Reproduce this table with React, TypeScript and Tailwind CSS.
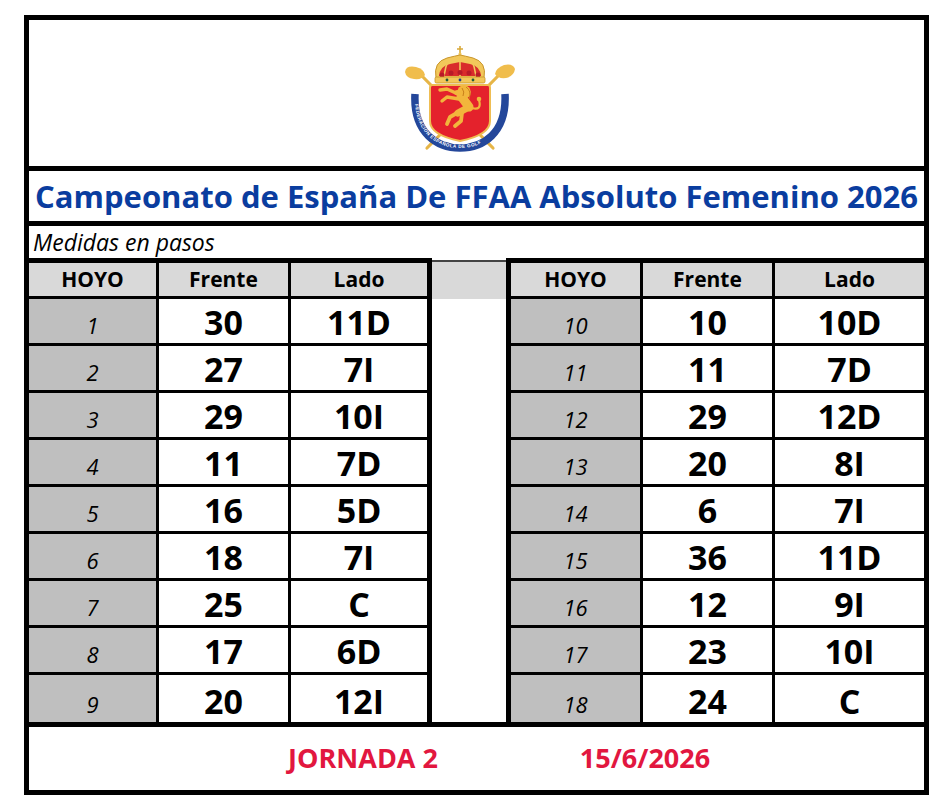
const left: [number, number, string][] = [
  [1, 30, '11D'],
  [2, 27, '7I'],
  [3, 29, '10I'],
  [4, 11, '7D'],
  [5, 16, '5D'],
  [6, 18, '7I'],
  [7, 25, 'C'],
  [8, 17, '6D'],
  [9, 20, '12I'],
];

const right: [number, number, string][] = [
  [10, 10, '10D'],
  [11, 11, '7D'],
  [12, 29, '12D'],
  [13, 20, '8I'],
  [14, 6, '7I'],
  [15, 36, '11D'],
  [16, 12, '9I'],
  [17, 23, '10I'],
  [18, 24, 'C'],
];

function Logo() {
  return (
    <svg width="120" height="112" viewBox="0 0 120 112">
      {/* golf clubs */}
      <g stroke="#e6b547" strokeWidth="3.2" strokeLinecap="round">
        <line x1="21" y1="31" x2="93" y2="104" />
        <line x1="99" y1="31" x2="27" y2="104" />
      </g>
      <path d="M5 28 Q6 21 16 23 Q24 25 25 31 Q22 36 14 35 Q6 34 5 28 Z" fill="#f0bd4c" />
      <path d="M115 25 Q113 19 104 21 Q96 24 95 30 Q98 35 106 34 Q114 32 115 25 Z" fill="#f0bd4c" />
      {/* ribbon */}
      <path
        id="rib"
        d="M15 50 C13 90 38 104 60 104 C82 104 107 90 105 50"
        fill="none"
        stroke="#24479a"
        strokeWidth="7.5"
      />
      <text fontSize="4.6" fill="#fff" fontFamily="Liberation Sans, sans-serif" fontWeight="700" letterSpacing="0.5">
        <textPath href="#rib" startOffset="10">FEDERACION ESPAÑOLA DE GOLF</textPath>
      </text>
      {/* crown */}
      <path d="M60 2 L60 9 M57 5 L63 5" stroke="#d9a93a" strokeWidth="1.6" />
      <circle cx="60" cy="10" r="1.6" fill="#f2c75a" />
      <path d="M36 34 Q33 18 47 14 Q55 12 60 11 Q65 12 73 14 Q87 18 84 34 Z" fill="#f2c75a" stroke="#c8952a" strokeWidth="1" />
      <path d="M39 32 Q40 22 50 20 L60 18 L70 20 Q80 22 81 32 Z" fill="#d92b2b" />
      <path d="M60 12 L60 32 M49 15 Q45 23 44 32 M71 15 Q75 23 76 32" stroke="#f2c75a" strokeWidth="1.6" fill="none" />
      <circle cx="42" cy="31" r="2.5" fill="#b81a28" />
      <circle cx="51" cy="29" r="2.5" fill="#b81a28" />
      <circle cx="60" cy="28.5" r="2.5" fill="#b81a28" />
      <circle cx="69" cy="29" r="2.5" fill="#b81a28" />
      <circle cx="78" cy="31" r="2.5" fill="#b81a28" />
      <rect x="35" y="33" width="50" height="6" rx="1.5" fill="#f2c75a" stroke="#c8952a" strokeWidth="0.8" />
      <circle cx="47" cy="36" r="1.4" fill="#1f5a3a" />
      <circle cx="60" cy="36" r="1.4" fill="#1f3a8a" />
      <circle cx="73" cy="36" r="1.4" fill="#1f5a3a" />
      {/* shield */}
      <path
        d="M32 41 L88 41 Q90 41 90 44 L90 77 Q90 91 60 97 Q30 91 30 77 L30 44 Q30 41 32 41 Z"
        fill="#e4222c"
        stroke="#efbd52"
        strokeWidth="2"
      />
      {/* lion */}
      <g stroke="#f2b63c" strokeLinecap="round" strokeLinejoin="round" fill="none">
        <path d="M61 52 L69 63" strokeWidth="9" />
        <path d="M69 63 L58 69" strokeWidth="7" />
        <path d="M58 50 L47 45 L40 46" strokeWidth="3.4" />
        <path d="M59 55 L47 53 L42 57" strokeWidth="3.4" />
        <path d="M57 69 L50 73 L47 80" strokeWidth="3.8" />
        <path d="M62 69 L61 77 L55 82" strokeWidth="3.8" />
        <path d="M72 64 Q82 67 79 56" strokeWidth="2.2" />
      </g>
      <circle cx="64" cy="48" r="6.8" fill="#f2b63c" />
      <ellipse cx="57.5" cy="48.5" rx="3.6" ry="2.6" fill="#f2b63c" />
      <path d="M66 43 Q72 47 69 55 M62 44 Q65 48 63 52" stroke="#c9801a" strokeWidth="1" fill="none" />
      <circle cx="79" cy="55" r="2.3" fill="#f2b63c" />
    </svg>
  );
}

function Table({ rows, side }: { rows: [number, number, string][]; side: 'left' | 'right' }) {
  const hoyoW = side === 'left' ? 'w-[130px]' : 'w-[132px]';
  return (
    <div
      className={`flex flex-col border-t-[5px] border-black ${
        side === 'left' ? 'w-[403px] border-r-[5px]' : 'flex-1 border-l-[5px]'
      }`}
    >
      <div className="flex h-[36px] bg-[#d9d9d9] border-b-[3px] border-black text-[21px] font-bold text-black">
        <div className={`${hoyoW} border-r-[3px] border-black flex items-center justify-center`}>HOYO</div>
        <div className="w-[132px] border-r-[3px] border-black flex items-center justify-center">Frente</div>
        <div className="flex-1 flex items-center justify-center">Lado</div>
      </div>
      {rows.map(([h, f, l], i) => (
        <div
          key={h}
          className={`flex ${i < rows.length - 1 ? 'h-[47px] border-b-[3px] border-black' : 'h-[47px]'}`}
        >
          <div
            className={`${hoyoW} bg-[#bfbfbf] border-r-[3px] border-black flex items-end justify-center pb-[7px] text-[22px] italic text-black leading-none`}
          >
            {h}
          </div>
          <div className="w-[132px] border-r-[3px] border-black flex items-end justify-center pb-[4px] text-[34px] font-bold text-black leading-none">
            {f}
          </div>
          <div className="flex-1 flex items-end justify-center pb-[4px] text-[34px] font-bold text-black leading-none">
            {l}
          </div>
        </div>
      ))}
    </div>
  );
}

export default function App() {
  return (
    <div className="min-h-[809px] bg-white pt-[15px] pl-[24px] font-['Open_Sans','Liberation_Sans',sans-serif]">
      <div className="w-[905px] border-[5px] border-black flex flex-col">
        <div className="h-[151px] border-b-[5px] border-black flex items-start justify-center pt-[24px] pr-[33px]">
          <Logo />
        </div>
        <div className="h-[55px] border-b-[5px] border-black flex items-center justify-center text-[31px] font-bold text-[#0a3d9f]">
          Campeonato de España De FFAA Absoluto Femenino 2026
        </div>
        <div className="h-[32px] flex items-center pl-[4px] text-[23px] italic text-black">
          Medidas en pasos
        </div>
        <div className="flex">
          <Table rows={left} side="left" />
          <div className="w-[74px] flex flex-col">
            <div className="h-[2px]" />
            <div className="h-[39px] bg-[#d9d9d9] border-t-2 border-[#444]" />
          </div>
          <Table rows={right} side="right" />
        </div>
        <div className="h-[68px] border-t-[5px] border-black flex items-center pl-[234px] text-[27px] font-bold text-[#e2173f]">
          <div className="w-[200px] text-center">JORNADA 2</div>
          <div className="w-[82px]" />
          <div className="w-[200px] text-center">15/6/2026</div>
        </div>
      </div>
    </div>
  );
}
